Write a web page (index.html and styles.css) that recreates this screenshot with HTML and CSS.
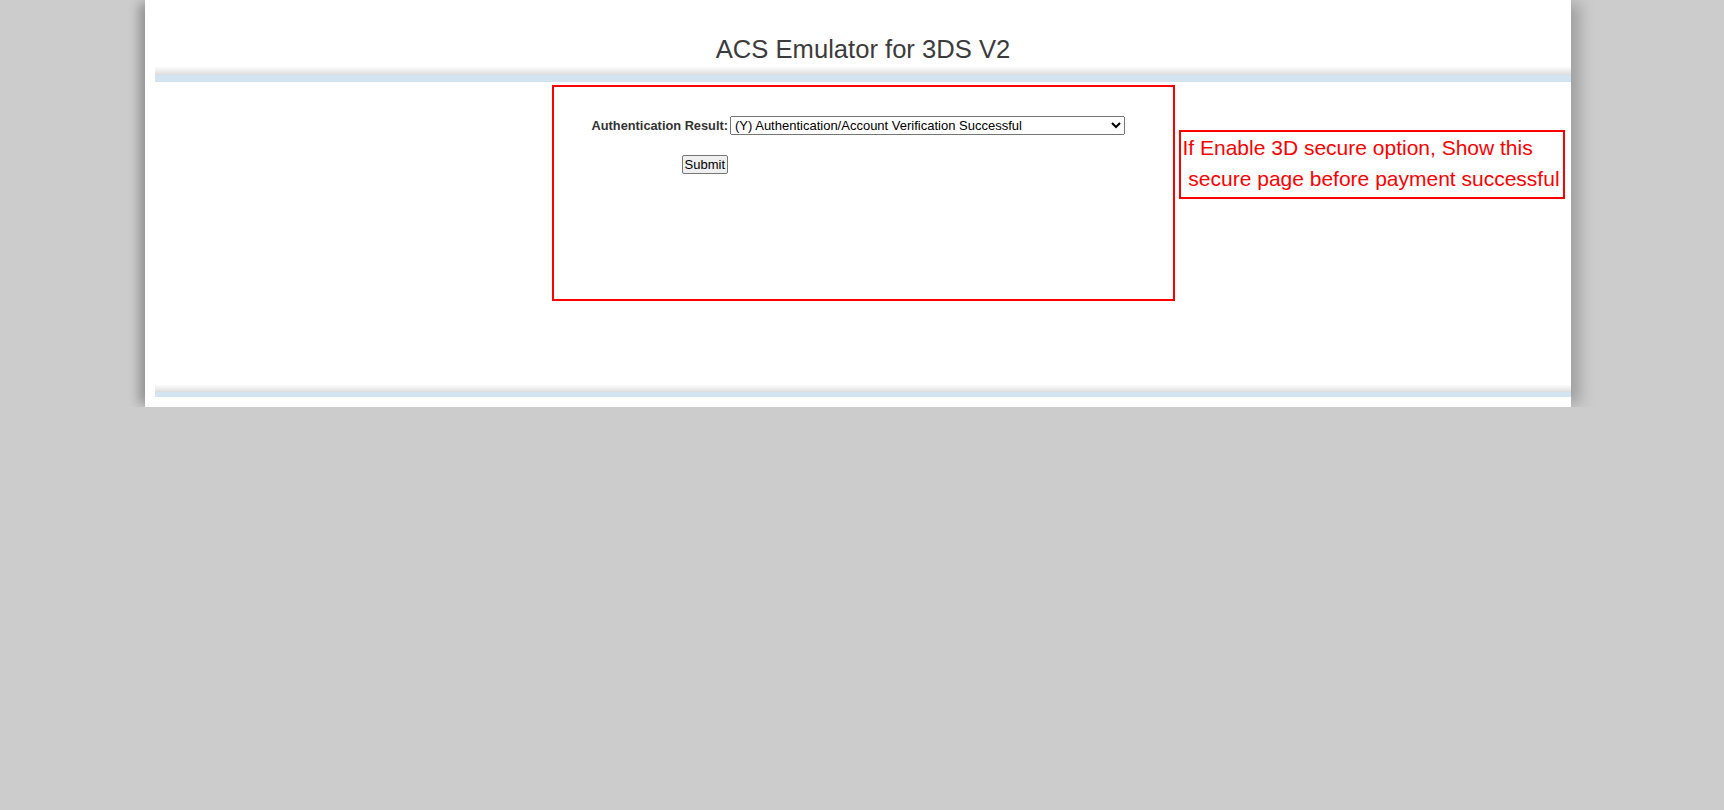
FILE: index.html
```html
<!DOCTYPE html>
<html lang="en">
<head>
<meta charset="utf-8">
<title>ACS Emulator for 3DS V2</title>
<link rel="stylesheet" href="styles.css">
</head>
<body>
<div class="page">
  <header class="header">
    <h1 class="title">ACS Emulator for 3DS V2</h1>
  </header>
  <div class="band band-top"></div>
  <main class="main">
    <div class="frame">
      <form class="auth-form" onsubmit="return false;">
        <label class="label" for="authResult">Authentication Result:</label>
        <select id="authResult" class="select">
          <option>(Y) Authentication/Account Verification Successful</option>
          <option>(N) Not Authenticated/Account Not Verified; Transaction denied</option>
          <option>(U) Authentication/Account Verification Could Not Be Performed</option>
          <option>(A) Attempts Processing Performed</option>
          <option>(C) Challenge Required</option>
          <option>(R) Authentication/Account Verification Rejected</option>
        </select>
        <button class="submit" type="submit">Submit</button>
      </form>
      <div class="note">If Enable 3D secure option, Show this<br>&nbsp;secure page before payment successful</div>
    </div>
  </main>
  <div class="band band-bottom"></div>
</div>
</body>
</html>
```

FILE: styles.css
```css
html, body {
  margin: 0;
  padding: 0;
}

body {
  background: #cccccc;
  font-family: "Liberation Sans", Arial, sans-serif;
  color: #333333;
}

.page {
  width: 1416px;
  margin-left: 145px;
  padding: 0 0 10px 10px;
  background: #ffffff;
  box-shadow: -9px 0 10px -3px rgba(0, 0, 0, 0.28), 12px 0 14px -3px rgba(0, 0, 0, 0.22);
}

.header {
  padding-top: 35px;
  padding-bottom: 3px;
}

.title {
  margin: 0;
  font-size: 25.6px;
  line-height: 29px;
  font-weight: normal;
  text-align: center;
  color: #3c3c3c;
}

.band {
  height: 15px;
}

.band-top {
  background: linear-gradient(to bottom, #fbfbfb 0, #ececec 4px, #dcdcdc 8px, #d4e3f0 8px, #d4e3f0 15px);
}

.band-bottom {
  height: 12px;
  background: linear-gradient(to bottom, #fbfbfb 0, #ececec 4px, #dcdcdc 7px, #d4e3f0 7px, #d4e3f0 12px);
}

.main {
  padding: 3px 0 84px;
}

.frame {
  position: relative;
  box-sizing: border-box;
  width: 623px;
  height: 216px;
  margin: 0 auto;
  border: 2px solid #ff0000;
  padding: 29px 0 0 38px;
}

.auth-form {
  display: grid;
  grid-template-columns: auto auto;
  justify-content: start;
  align-items: center;
  column-gap: 2px;
  row-gap: 20px;
}

.label {
  font-size: 12.8px;
  font-weight: bold;
  color: #333333;
  text-align: right;
}

.select {
  width: 395px;
  height: 19px;
  font-family: "Liberation Sans", Arial, sans-serif;
  font-size: 13px;
  color: #000000;
  margin: 0;
}

.submit {
  grid-column: 1;
  justify-self: end;
  font-family: "Liberation Sans", Arial, sans-serif;
  font-size: 13px;
  line-height: 15px;
  color: #000000;
  padding: 1px 2px;
  margin: 0;
  border: 1px solid #767676;
  border-radius: 2px;
  background: #efefef;
}

.note {
  position: absolute;
  left: calc(100% + 6px);
  top: 43px;
  width: 380px;
  padding: 0 0 3px 2px;
  border: 2px solid #ff0000;
  color: #ff0000;
  font-size: 21px;
  line-height: 31px;
  white-space: nowrap;
}
```
